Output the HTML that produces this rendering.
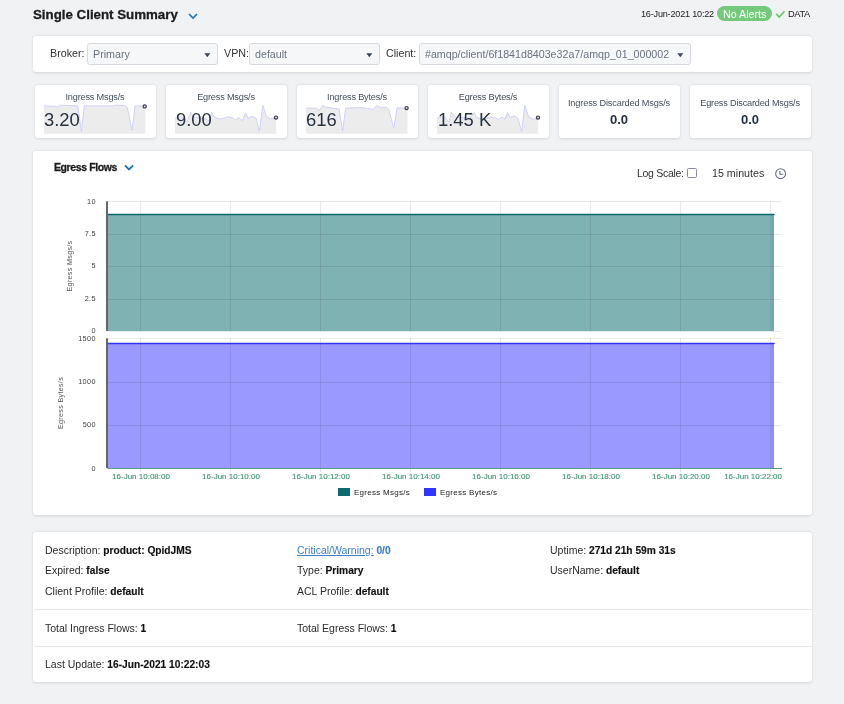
<!DOCTYPE html>
<html><head><meta charset="utf-8"><style>
html,body{margin:0;padding:0;width:844px;height:704px;overflow:hidden;background:#f0f2f4;font-family:"Liberation Sans",sans-serif;}
.t{position:absolute;white-space:nowrap;line-height:1;will-change:transform;}
</style></head><body>
<span class="t" style="left:33px;top:8.14px;font-size:13.3px;font-weight:bold;color:#1c1c1c;letter-spacing:0px;-webkit-text-stroke:0.3px #1c1c1c;">Single Client Summary</span>
<svg style="position:absolute;left:187.5px;top:11.7px" width="10" height="8" viewBox="0 0 10 8"><path d="M1 2 L5 6 L9 2" fill="none" stroke="#2476b6" stroke-width="1.7"/></svg>
<span class="t" style="left:641.4px;top:9.70px;font-size:9.1px;font-weight:normal;color:#222;letter-spacing:-0.2px;">16-Jun-2021 10:22</span>
<div style="position:absolute;left:716.8px;top:6px;width:55.7px;height:15px;background:#76c97c;border-radius:8px;"></div>
<span class="t" style="left:723.2px;top:9.14px;font-size:10.7px;font-weight:normal;color:#fff;letter-spacing:0px;">No Alerts</span>
<svg style="position:absolute;left:770px;top:4px" width="20" height="20" viewBox="0 0 20 20"><path d="M6.2 9.8 L9.2 13 L14.5 7.4" fill="none" stroke="#6cc870" stroke-width="1.7"/></svg>
<span class="t" style="left:788.4px;top:9.73px;font-size:9.3px;font-weight:normal;color:#222;letter-spacing:-0.4px;">DATA</span>
<div style="position:absolute;left:33.4px;top:36px;width:778.6px;height:36px;background:#fff;border-radius:3px;box-shadow:0 0.5px 3px rgba(0,0,0,0.13);"></div>
<span class="t" style="left:49.6px;top:47.94px;font-size:10.7px;font-weight:normal;color:#333;letter-spacing:0px;">Broker:</span>
<div style="position:absolute;left:87px;top:43px;width:130.5px;height:21.5px;background:#f6f7f9;border:1px solid #d6d9de;border-radius:3px;box-sizing:border-box;"></div>
<span class="t" style="left:93px;top:49.24px;font-size:10.7px;font-weight:normal;color:#6b7480;letter-spacing:0px;">Primary</span>
<svg style="position:absolute;left:204px;top:53px" width="7" height="5" viewBox="0 0 7 5"><path d="M0.3 0.3 L6.3 0.3 L3.3 4.3 Z" fill="#3d4656"/></svg>
<span class="t" style="left:223.6px;top:47.94px;font-size:10.7px;font-weight:normal;color:#333;letter-spacing:0px;">VPN:</span>
<div style="position:absolute;left:249.2px;top:43px;width:130.5px;height:21.5px;background:#f6f7f9;border:1px solid #d6d9de;border-radius:3px;box-sizing:border-box;"></div>
<span class="t" style="left:255.4px;top:49.24px;font-size:10.7px;font-weight:normal;color:#6b7480;letter-spacing:0px;">default</span>
<svg style="position:absolute;left:366px;top:53px" width="7" height="5" viewBox="0 0 7 5"><path d="M0.3 0.3 L6.3 0.3 L3.3 4.3 Z" fill="#3d4656"/></svg>
<span class="t" style="left:385.7px;top:47.94px;font-size:10.7px;font-weight:normal;color:#333;letter-spacing:0px;">Client:</span>
<div style="position:absolute;left:418.5px;top:43px;width:272.3px;height:21.5px;background:#f6f7f9;border:1px solid #d6d9de;border-radius:3px;box-sizing:border-box;"></div>
<span class="t" style="left:425px;top:49.27px;font-size:10.67px;font-weight:normal;color:#6b7480;letter-spacing:0px;">#amqp/client/6f1841d8403e32a7/amqp_01_000002</span>
<svg style="position:absolute;left:677px;top:53px" width="7" height="5" viewBox="0 0 7 5"><path d="M0.3 0.3 L6.3 0.3 L3.3 4.3 Z" fill="#3d4656"/></svg>
<div style="position:absolute;left:35px;top:85px;width:120.7px;height:52.5px;background:#fff;border-radius:3px;box-shadow:0 0.5px 3px rgba(0,0,0,0.13);"></div>
<div style="position:absolute;left:166px;top:85px;width:120.7px;height:52.5px;background:#fff;border-radius:3px;box-shadow:0 0.5px 3px rgba(0,0,0,0.13);"></div>
<div style="position:absolute;left:297px;top:85px;width:120.7px;height:52.5px;background:#fff;border-radius:3px;box-shadow:0 0.5px 3px rgba(0,0,0,0.13);"></div>
<div style="position:absolute;left:428px;top:85px;width:120.7px;height:52.5px;background:#fff;border-radius:3px;box-shadow:0 0.5px 3px rgba(0,0,0,0.13);"></div>
<div style="position:absolute;left:559px;top:85px;width:120.7px;height:52.5px;background:#fff;border-radius:3px;box-shadow:0 0.5px 3px rgba(0,0,0,0.13);"></div>
<div style="position:absolute;left:690px;top:85px;width:120.7px;height:52.5px;background:#fff;border-radius:3px;box-shadow:0 0.5px 3px rgba(0,0,0,0.13);"></div>
<svg style="position:absolute;left:0;top:0" width="844" height="150"><polygon points="43.9,133.7 43.9,105.9 43.9,105.9 55.6,106.3 57.6,107.2 60.2,105.2 77.8,105.9 81.4,131.9 84.3,105.9 113.0,105.9 115.6,105.2 124.7,105.5 127.3,107.2 131.9,130.6 135.1,105.9 144.3,105.9 145.3,105.9 145.3,133.7" fill="#ececec"/><polyline points="43.9,105.9 55.6,106.3 57.6,107.2 60.2,105.2 77.8,105.9 81.4,131.9 84.3,105.9 113.0,105.9 115.6,105.2 124.7,105.5 127.3,107.2 131.9,130.6 135.1,105.9 144.3,105.9" fill="none" stroke="#d0d0fc" stroke-width="1"/><circle cx="144.7" cy="106.4" r="1.6" fill="#d8d8f8" stroke="#3a3a44" stroke-width="1.2"/></svg>
<svg style="position:absolute;left:0;top:0" width="844" height="150"><polygon points="175.0,133.7 175.0,118.2 175.0,118.2 179.1,116.9 182.4,116.7 186.9,122.2 190.9,112.4 193.5,116.9 200.0,118.2 205.2,118.9 209.1,120.9 211.7,112.4 214.3,116.9 219.5,118.9 224.7,118.2 227.3,116.9 232.6,117.6 235.2,120.2 239.1,117.6 242.3,120.9 245.6,113.0 248.2,118.2 252.1,116.3 256.0,118.2 259.3,131.3 262.8,105.2 266.4,116.3 270.4,118.9 274.9,118.2 276.2,118.2 276.2,133.7" fill="#ececec"/><polyline points="175.0,118.2 179.1,116.9 182.4,116.7 186.9,122.2 190.9,112.4 193.5,116.9 200.0,118.2 205.2,118.9 209.1,120.9 211.7,112.4 214.3,116.9 219.5,118.9 224.7,118.2 227.3,116.9 232.6,117.6 235.2,120.2 239.1,117.6 242.3,120.9 245.6,113.0 248.2,118.2 252.1,116.3 256.0,118.2 259.3,131.3 262.8,105.2 266.4,116.3 270.4,118.9 274.9,118.2" fill="none" stroke="#d0d0fc" stroke-width="1"/><circle cx="276.0" cy="117.6" r="1.6" fill="#d8d8f8" stroke="#3a3a44" stroke-width="1.2"/></svg>
<svg style="position:absolute;left:0;top:0" width="844" height="150"><polygon points="305.9,133.7 305.9,108.1 305.9,108.1 316.3,108.1 319.5,110.4 322.8,105.2 326.1,107.2 339.1,109.1 342.7,131.3 345.6,108.1 362.6,107.6 367.8,108.5 373.0,109.4 376.9,105.5 380.8,107.8 386.7,107.6 388.6,109.1 393.8,128.0 397.1,107.6 405.6,108.5 407.5,108.5 407.5,133.7" fill="#ececec"/><polyline points="305.9,108.1 316.3,108.1 319.5,110.4 322.8,105.2 326.1,107.2 339.1,109.1 342.7,131.3 345.6,108.1 362.6,107.6 367.8,108.5 373.0,109.4 376.9,105.5 380.8,107.8 386.7,107.6 388.6,109.1 393.8,128.0 397.1,107.6 405.6,108.5" fill="none" stroke="#d0d0fc" stroke-width="1"/><circle cx="406.6" cy="108.1" r="1.6" fill="#d8d8f8" stroke="#3a3a44" stroke-width="1.2"/></svg>
<svg style="position:absolute;left:0;top:0" width="844" height="150"><polygon points="437.0,133.7 437.0,118.2 437.0,118.2 441.1,116.9 444.4,116.7 448.9,122.2 451.5,112.4 455.5,116.9 460.7,117.6 471.1,116.9 474.4,112.4 476.3,117.6 481.5,118.9 486.7,118.2 490.6,116.9 495.9,118.2 498.5,119.5 502.4,116.9 505.0,119.5 507.6,112.4 510.2,117.6 514.1,115.6 518.0,118.2 521.7,131.9 524.8,105.2 528.4,116.3 532.4,118.9 536.9,118.9 538.2,118.9 538.2,133.7" fill="#ececec"/><polyline points="437.0,118.2 441.1,116.9 444.4,116.7 448.9,122.2 451.5,112.4 455.5,116.9 460.7,117.6 471.1,116.9 474.4,112.4 476.3,117.6 481.5,118.9 486.7,118.2 490.6,116.9 495.9,118.2 498.5,119.5 502.4,116.9 505.0,119.5 507.6,112.4 510.2,117.6 514.1,115.6 518.0,118.2 521.7,131.9 524.8,105.2 528.4,116.3 532.4,118.9 536.9,118.9" fill="none" stroke="#d0d0fc" stroke-width="1"/><circle cx="538.0" cy="117.6" r="1.6" fill="#d8d8f8" stroke="#3a3a44" stroke-width="1.2"/></svg>
<span class="t" style="left:25.14999999999999px;width:140px;text-align:center;top:92.81px;font-size:9.2px;color:#46505c;letter-spacing:-0.2px">Ingress Msgs/s</span>
<span class="t" style="left:44.2px;top:110.72px;font-size:18.4px;font-weight:normal;color:#26323f;letter-spacing:0px;">3.20</span>
<span class="t" style="left:156.35px;width:140px;text-align:center;top:92.81px;font-size:9.2px;color:#46505c;letter-spacing:-0.2px">Egress Msgs/s</span>
<span class="t" style="left:175.5px;top:110.72px;font-size:18.4px;font-weight:normal;color:#26323f;letter-spacing:0px;">9.00</span>
<span class="t" style="left:287.40000000000003px;width:140px;text-align:center;top:92.81px;font-size:9.2px;color:#46505c;letter-spacing:-0.2px">Ingress Bytes/s</span>
<span class="t" style="left:305.8px;top:110.72px;font-size:18.4px;font-weight:normal;color:#26323f;letter-spacing:0px;">616</span>
<span class="t" style="left:418.25px;width:140px;text-align:center;top:92.81px;font-size:9.2px;color:#46505c;letter-spacing:-0.2px">Egress Bytes/s</span>
<span class="t" style="left:438px;top:110.72px;font-size:18.4px;font-weight:normal;color:#26323f;letter-spacing:0px;">1.45 K</span>
<span class="t" style="left:549.3000000000001px;width:140px;text-align:center;top:98.71px;font-size:9.2px;color:#46505c;letter-spacing:-0.15px">Ingress Discarded Msgs/s</span>
<span class="t" style="left:680.4px;width:140px;text-align:center;top:98.71px;font-size:9.2px;color:#46505c;letter-spacing:-0.2px">Egress Discarded Msgs/s</span>
<span class="t" style="left:610px;top:113.30px;font-size:13px;font-weight:bold;color:#26323f;letter-spacing:0px;">0.0</span>
<span class="t" style="left:741px;top:113.30px;font-size:13px;font-weight:bold;color:#26323f;letter-spacing:0px;">0.0</span>
<div style="position:absolute;left:33.4px;top:150.5px;width:778.6px;height:364.7px;background:#fff;border-radius:3px;box-shadow:0 0.5px 3px rgba(0,0,0,0.13);"></div>
<span class="t" style="left:54.2px;top:162.01px;font-size:10.5px;font-weight:bold;color:#1c1c1c;letter-spacing:-0.4px;-webkit-text-stroke:0.3px #1c1c1c;">Egress Flows</span>
<svg style="position:absolute;left:124px;top:163.5px" width="10" height="8" viewBox="0 0 10 8"><path d="M1 1.5 L5 5.5 L9 1.5" fill="none" stroke="#2476b6" stroke-width="1.8"/></svg>
<span class="t" style="left:637.3px;top:167.91px;font-size:10.5px;font-weight:normal;color:#333;letter-spacing:-0.3px;">Log Scale:</span>
<div style="position:absolute;left:687.1px;top:168.3px;width:9.5px;height:9.4px;border:1.3px solid #8a8aa2;border-radius:1.5px;box-sizing:border-box;background:#fff;"></div>
<span class="t" style="left:711.6px;top:168.04px;font-size:10.7px;font-weight:normal;color:#333;letter-spacing:0px;">15 minutes</span>
<svg style="position:absolute;left:770px;top:163px" width="20" height="20" viewBox="0 0 20 20"><circle cx="10.6" cy="10.7" r="4.9" fill="none" stroke="#6a7080" stroke-width="1.1"/><path d="M9.9 8.0 V11.3 H13.3" fill="none" stroke="#6a7080" stroke-width="1.1"/></svg>
<svg style="position:absolute;left:0;top:0" width="844" height="520">
<rect x="108" y="214.5" width="666" height="116.5" fill="#006666" fill-opacity="0.5"/>
<line x1="107.5" y1="201.5" x2="782" y2="201.5" stroke="#000" stroke-opacity="0.085" stroke-width="1"/>
<line x1="107.5" y1="234.5" x2="782" y2="234.5" stroke="#000" stroke-opacity="0.085" stroke-width="1"/>
<line x1="107.5" y1="266.5" x2="782" y2="266.5" stroke="#000" stroke-opacity="0.085" stroke-width="1"/>
<line x1="107.5" y1="299.5" x2="782" y2="299.5" stroke="#000" stroke-opacity="0.085" stroke-width="1"/>
<line x1="107.5" y1="331.5" x2="782" y2="331.5" stroke="#000" stroke-opacity="0.085" stroke-width="1"/>
<line x1="140.5" y1="201" x2="140.5" y2="331" stroke="#000" stroke-opacity="0.085" stroke-width="1"/>
<line x1="230.5" y1="201" x2="230.5" y2="331" stroke="#000" stroke-opacity="0.085" stroke-width="1"/>
<line x1="320.5" y1="201" x2="320.5" y2="331" stroke="#000" stroke-opacity="0.085" stroke-width="1"/>
<line x1="410.5" y1="201" x2="410.5" y2="331" stroke="#000" stroke-opacity="0.085" stroke-width="1"/>
<line x1="500.5" y1="201" x2="500.5" y2="331" stroke="#000" stroke-opacity="0.085" stroke-width="1"/>
<line x1="590.5" y1="201" x2="590.5" y2="331" stroke="#000" stroke-opacity="0.085" stroke-width="1"/>
<line x1="680.5" y1="201" x2="680.5" y2="331" stroke="#000" stroke-opacity="0.085" stroke-width="1"/>
<line x1="770.5" y1="201" x2="770.5" y2="214.5" stroke="#000" stroke-opacity="0.085" stroke-width="1"/>
<rect x="770" y="214.5" width="4" height="116.5" fill="#000040" fill-opacity="0.06"/>
<line x1="108" y1="214.5" x2="774" y2="214.5" stroke="#0a6a6a" stroke-width="1.6" stroke-linecap="round"/>
<rect x="106" y="201.3" width="2" height="129.7" fill="#666"/>
<rect x="108" y="343.5" width="666" height="124.5" fill="#3333ff" fill-opacity="0.5"/>
<line x1="107.5" y1="338.5" x2="782" y2="338.5" stroke="#000" stroke-opacity="0.085" stroke-width="1"/>
<line x1="107.5" y1="382.5" x2="782" y2="382.5" stroke="#000" stroke-opacity="0.085" stroke-width="1"/>
<line x1="107.5" y1="425.5" x2="782" y2="425.5" stroke="#000" stroke-opacity="0.085" stroke-width="1"/>
<line x1="140.5" y1="338" x2="140.5" y2="468" stroke="#000" stroke-opacity="0.085" stroke-width="1"/>
<line x1="230.5" y1="338" x2="230.5" y2="468" stroke="#000" stroke-opacity="0.085" stroke-width="1"/>
<line x1="320.5" y1="338" x2="320.5" y2="468" stroke="#000" stroke-opacity="0.085" stroke-width="1"/>
<line x1="410.5" y1="338" x2="410.5" y2="468" stroke="#000" stroke-opacity="0.085" stroke-width="1"/>
<line x1="500.5" y1="338" x2="500.5" y2="468" stroke="#000" stroke-opacity="0.085" stroke-width="1"/>
<line x1="590.5" y1="338" x2="590.5" y2="468" stroke="#000" stroke-opacity="0.085" stroke-width="1"/>
<line x1="680.5" y1="338" x2="680.5" y2="468" stroke="#000" stroke-opacity="0.085" stroke-width="1"/>
<line x1="770.5" y1="338" x2="770.5" y2="343.5" stroke="#000" stroke-opacity="0.085" stroke-width="1"/>
<rect x="770" y="343.5" width="4" height="124.5" fill="#000040" fill-opacity="0.06"/>
<line x1="108" y1="343.5" x2="774" y2="343.5" stroke="#3535f0" stroke-width="1.6" stroke-linecap="round"/>
<rect x="106" y="338.3" width="2" height="129.7" fill="#666"/>
<line x1="107.5" y1="468.5" x2="782" y2="468.5" stroke="#5a9a80" stroke-width="1"/>
<line x1="140.5" y1="469" x2="140.5" y2="472" stroke="#dfe3ee" stroke-width="1"/>
<line x1="230.5" y1="469" x2="230.5" y2="472" stroke="#dfe3ee" stroke-width="1"/>
<line x1="320.5" y1="469" x2="320.5" y2="472" stroke="#dfe3ee" stroke-width="1"/>
<line x1="410.5" y1="469" x2="410.5" y2="472" stroke="#dfe3ee" stroke-width="1"/>
<line x1="500.5" y1="469" x2="500.5" y2="472" stroke="#dfe3ee" stroke-width="1"/>
<line x1="590.5" y1="469" x2="590.5" y2="472" stroke="#dfe3ee" stroke-width="1"/>
<line x1="680.5" y1="469" x2="680.5" y2="472" stroke="#dfe3ee" stroke-width="1"/>
<line x1="770.5" y1="469" x2="770.5" y2="472" stroke="#dfe3ee" stroke-width="1"/>
</svg>
<span class="t" style="left:56.400000000000006px;width:40px;text-align:right;top:197.72px;font-size:7.3px;letter-spacing:0.4px;color:#444">10</span>
<span class="t" style="left:56.400000000000006px;width:40px;text-align:right;top:229.72px;font-size:7.3px;letter-spacing:0.4px;color:#444">7.5</span>
<span class="t" style="left:56.400000000000006px;width:40px;text-align:right;top:262.22px;font-size:7.3px;letter-spacing:0.4px;color:#444">5</span>
<span class="t" style="left:56.400000000000006px;width:40px;text-align:right;top:294.72px;font-size:7.3px;letter-spacing:0.4px;color:#444">2.5</span>
<span class="t" style="left:56.400000000000006px;width:40px;text-align:right;top:326.72px;font-size:7.3px;letter-spacing:0.4px;color:#444">0</span>
<span class="t" style="left:56.400000000000006px;width:40px;text-align:right;top:335.02px;font-size:7.3px;letter-spacing:0.4px;color:#444">1500</span>
<span class="t" style="left:56.400000000000006px;width:40px;text-align:right;top:378.22px;font-size:7.3px;letter-spacing:0.4px;color:#444">1000</span>
<span class="t" style="left:56.400000000000006px;width:40px;text-align:right;top:421.42px;font-size:7.3px;letter-spacing:0.4px;color:#444">500</span>
<span class="t" style="left:56.400000000000006px;width:40px;text-align:right;top:464.62px;font-size:7.3px;letter-spacing:0.4px;color:#444">0</span>
<span class="t" style="left:70.2px;top:266px;font-size:7.2px;color:#555;letter-spacing:0.3px;will-change:auto;transform:translate(-50%,-50%) rotate(-90deg)">Egress Msgs/s</span>
<span class="t" style="left:61px;top:403.4px;font-size:7.2px;color:#555;letter-spacing:0.3px;will-change:auto;transform:translate(-50%,-50%) rotate(-90deg)">Egress Bytes/s</span>
<span class="t" style="left:100.5px;width:80px;text-align:center;top:473.13px;font-size:8px;color:#3f9272;-webkit-text-stroke:0.12px #3f9272">16-Jun 10:08:00</span>
<span class="t" style="left:190.5px;width:80px;text-align:center;top:473.13px;font-size:8px;color:#3f9272;-webkit-text-stroke:0.12px #3f9272">16-Jun 10:10:00</span>
<span class="t" style="left:280.5px;width:80px;text-align:center;top:473.13px;font-size:8px;color:#3f9272;-webkit-text-stroke:0.12px #3f9272">16-Jun 10:12:00</span>
<span class="t" style="left:370.5px;width:80px;text-align:center;top:473.13px;font-size:8px;color:#3f9272;-webkit-text-stroke:0.12px #3f9272">16-Jun 10:14:00</span>
<span class="t" style="left:460.5px;width:80px;text-align:center;top:473.13px;font-size:8px;color:#3f9272;-webkit-text-stroke:0.12px #3f9272">16-Jun 10:16:00</span>
<span class="t" style="left:550.5px;width:80px;text-align:center;top:473.13px;font-size:8px;color:#3f9272;-webkit-text-stroke:0.12px #3f9272">16-Jun 10:18:00</span>
<span class="t" style="left:640.5px;width:80px;text-align:center;top:473.13px;font-size:8px;color:#3f9272;-webkit-text-stroke:0.12px #3f9272">16-Jun 10:20:00</span>
<span class="t" style="left:702px;width:80px;text-align:right;top:473.13px;font-size:8px;color:#3f9272;-webkit-text-stroke:0.12px #3f9272">16-Jun 10:22:00</span>
<div style="position:absolute;left:338.1px;top:488.1px;width:11.7px;height:7.5px;background:#0d6b6b;"></div>
<span class="t" style="left:353.9px;top:488.83px;font-size:8px;font-weight:normal;color:#222;letter-spacing:0.28px;">Egress Msgs/s</span>
<div style="position:absolute;left:424.3px;top:488.1px;width:11.5px;height:7.5px;background:#3333ff;"></div>
<span class="t" style="left:439.8px;top:488.83px;font-size:8px;font-weight:normal;color:#222;letter-spacing:0.28px;">Egress Bytes/s</span>
<div style="position:absolute;left:33.4px;top:531.6px;width:778.6px;height:150.3px;background:#fff;border-radius:3px;box-shadow:0 0.5px 3px rgba(0,0,0,0.13);"></div>
<div style="position:absolute;left:33.5px;top:609px;width:778.5px;height:1px;background:#e8e9eb;"></div>
<div style="position:absolute;left:33.5px;top:646px;width:778.5px;height:1px;background:#e8e9eb;"></div>
<span class="t" style="left:45.4px;top:544.51px;font-size:10.5px;color:#2b2b2b;">Description:<b style="color:#111;margin-left:2.8px;font-size:10.2px;-webkit-text-stroke:0.15px #111">product: QpidJMS</b></span>
<span class="t" style="left:45.4px;top:565.41px;font-size:10.5px;color:#2b2b2b;">Expired:<b style="color:#111;margin-left:2.8px;font-size:10.2px;-webkit-text-stroke:0.15px #111">false</b></span>
<span class="t" style="left:45.4px;top:586.11px;font-size:10.5px;color:#2b2b2b;">Client Profile:<b style="color:#111;margin-left:2.8px;font-size:10.2px;-webkit-text-stroke:0.15px #111">default</b></span>
<span class="t" style="left:297.1px;top:544.51px;font-size:10.5px;color:#2b2b2b;"><span style="color:#3d7fc4;text-decoration:underline">Critical/Warning:</span><b style="color:#3d7fc4;margin-left:2.8px;font-size:10.2px;-webkit-text-stroke:0.15px #3d7fc4">0/0</b></span>
<span class="t" style="left:297.1px;top:565.41px;font-size:10.5px;color:#2b2b2b;">Type:<b style="color:#111;margin-left:2.8px;font-size:10.2px;-webkit-text-stroke:0.15px #111">Primary</b></span>
<span class="t" style="left:297.1px;top:586.11px;font-size:10.5px;color:#2b2b2b;">ACL Profile:<b style="color:#111;margin-left:2.8px;font-size:10.2px;-webkit-text-stroke:0.15px #111">default</b></span>
<span class="t" style="left:549.7px;top:544.51px;font-size:10.5px;color:#2b2b2b;">Uptime:<b style="color:#111;margin-left:2.8px;font-size:10.2px;-webkit-text-stroke:0.15px #111">271d 21h 59m 31s</b></span>
<span class="t" style="left:549.7px;top:565.41px;font-size:10.5px;color:#2b2b2b;">UserName:<b style="color:#111;margin-left:2.8px;font-size:10.2px;-webkit-text-stroke:0.15px #111">default</b></span>
<span class="t" style="left:45.4px;top:623.11px;font-size:10.5px;color:#2b2b2b;">Total Ingress Flows:<b style="color:#111;margin-left:2.8px;font-size:10.2px;-webkit-text-stroke:0.15px #111">1</b></span>
<span class="t" style="left:297.1px;top:623.11px;font-size:10.5px;color:#2b2b2b;">Total Egress Flows:<b style="color:#111;margin-left:2.8px;font-size:10.2px;-webkit-text-stroke:0.15px #111">1</b></span>
<span class="t" style="left:45.4px;top:659.31px;font-size:10.5px;color:#2b2b2b;">Last Update:<b style="color:#111;margin-left:2.8px;font-size:10.2px;-webkit-text-stroke:0.15px #111">16-Jun-2021 10:22:03</b></span>
</body></html>
